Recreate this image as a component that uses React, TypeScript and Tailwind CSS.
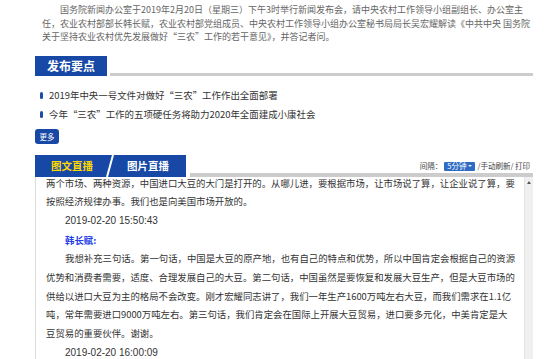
import React from "react";

const intro = [
  "国务院新闻办公室于2019年2月20日（星期三）下午3时举行新闻发布会，请中央农村工作领导小组副组长、办公室主",
  "任，农业农村部部长韩长赋，农业农村部党组成员、中央农村工作领导小组办公室秘书局局长吴宏耀解读《中共中央 国务院",
  "关于坚持农业农村优先发展做好“三农”工作的若干意见》，并答记者问。",
];

const points = [
  "2019年中央一号文件对做好“三农”工作作出全面部署",
  "今年“三农”工作的五项硬任务将助力2020年全面建成小康社会",
];

const Line: React.FC<{ indent?: boolean; children: React.ReactNode }> = ({ indent, children }) => (
  <div className={`whitespace-nowrap ${indent ? "pl-[19px]" : ""}`}>{children}</div>
);

const Stamp: React.FC<{ time: string }> = ({ time }) => (
  <span className="font-['Liberation_Sans',sans-serif] text-[10px]">{time}</span>
);

const LiveFeed: React.FC = () => (
  <div className="flex h-[190px] border-l border-[#dcdcdc]">
    <div className="flex-1 overflow-hidden pl-[10px] text-[9.4px] leading-[18.67px] text-[#333]">
      <div className="mt-[-3.5px]">
        <Line>两个市场、两种资源，中国进口大豆的大门是打开的。从哪儿进，要根据市场，让市场说了算，让企业说了算，要</Line>
        <Line>按照经济规律办事。我们也是向美国市场开放的。</Line>
        <Line indent>
          <Stamp time="2019-02-20 15:50:43" />
        </Line>
        <Line indent>
          <span className="font-bold text-[#2340e8]">韩长赋:</span>
        </Line>
        <Line indent>我想补充三句话。第一句话，中国是大豆的原产地，也有自己的特点和优势，所以中国肯定会根据自己的资源</Line>
        <Line>优势和消费者需要，适度、合理发展自己的大豆。第二句话，中国虽然是要恢复和发展大豆生产，但是大豆市场的</Line>
        <Line>供给以进口大豆为主的格局不会改变。刚才宏耀同志讲了，我们一年生产1600万吨左右大豆，而我们需求在1.1亿</Line>
        <Line>吨，常年需要进口9000万吨左右。第三句话，我们肯定会在国际上开展大豆贸易，进口要多元化，中美肯定是大</Line>
        <Line>豆贸易的重要伙伴。谢谢。</Line>
        <Line indent>
          <Stamp time="2019-02-20 16:00:09" />
        </Line>
      </div>
    </div>
    <div className="flex w-[9px] flex-col items-center border-l border-[#e4e4e4] bg-[#f0f0f0] pt-[4px]">
      <div className="h-0 w-0 border-x-[2px] border-b-[3px] border-x-transparent border-b-[#555]" />
    </div>
  </div>
);

export default function App() {
  return (
    <div className="h-[359px] w-[550px] overflow-hidden bg-white font-['Noto_Sans_CJK_SC','Liberation_Sans',sans-serif]">
      <div className="pl-[35px] pr-[17px]">
        <div className="pl-[7px] pt-[3px] text-[9px] leading-[13.5px] text-[#666]">
          <div className="whitespace-nowrap pl-[18px]">{intro[0]}</div>
          <div className="whitespace-nowrap">{intro[1]}</div>
          <div className="whitespace-nowrap">{intro[2]}</div>
        </div>

        <div className="mt-[12.5px] flex items-end">
          <div className="flex h-[20px] w-[72px] items-center justify-center bg-[#1848a5] text-[12px] font-bold text-white">
            发布要点
          </div>
          <div className="ml-[3px] h-[3px] flex-1 bg-[#cccccc]" />
        </div>

        <div className="pt-[9.5px] text-[9.45px] leading-[19px] text-[#333]">
          {points.map((p) => (
            <div key={p} className="flex items-center whitespace-nowrap">
              <span className="ml-[5px] mr-[6px] h-[7px] w-[3px] rounded-[1.5px] bg-[#1c4ca6]" />
              {p}
            </div>
          ))}
        </div>

        <div className="mt-[5.5px] flex h-[15px] w-[24px] items-center justify-center rounded-[3px] bg-[#1848a5] text-[7.5px] text-white">
          更多
        </div>

        <div className="mt-[11px] flex items-end">
          <div className="flex h-[22px] w-[151px] items-center bg-[#1848a5] text-[10.5px] font-bold">
            <span className="pl-[16px] text-[#ffd800]">图文直播</span>
            <svg className="ml-[12px]" width="10" height="22" viewBox="0 0 10 22">
              <line x1="8" y1="0" x2="2" y2="22" stroke="#fff" strokeWidth="2" />
            </svg>
            <span className="pl-[12px] text-white">图片直播</span>
          </div>
          <div className="ml-[4px] flex flex-1 flex-col">
            <div className="flex items-center justify-end pr-[3px] pb-[2px] text-[7.5px] leading-[10px] text-[#444]">
              <span>间隔：</span>
              <span className="mx-[2px] flex h-[9px] items-center rounded-[1px] bg-[#2e6bc4] px-[3px] text-white">
                5分钟
                <span className="ml-[2px] h-0 w-0 border-x-[2px] border-t-[2.5px] border-x-transparent border-t-[#e8eefa]" />
              </span>
              <span>/手动刷新/ 打印</span>
            </div>
            <div className="h-[4px] bg-[#cccccc]" />
          </div>
        </div>

        <LiveFeed />
      </div>
    </div>
  );
}
